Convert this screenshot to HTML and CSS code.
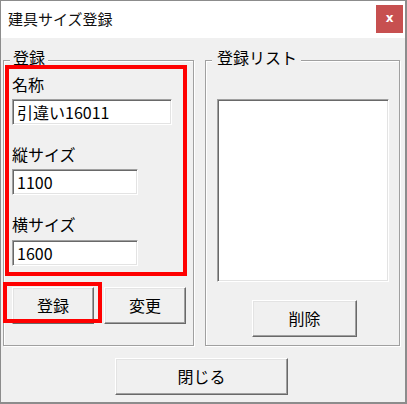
FILE: index.html
```html
<!DOCTYPE html>
<html lang="ja">
<head>
<meta charset="utf-8">
<link rel="stylesheet" href="styles.css">
</head>
<body>
<div class="window">
  <div class="titlebar">
    <div class="title">建具サイズ登録</div>
    <div class="close">x</div>
  </div>
  <div class="client">
    <div class="groups">
      <div class="group group-left">
        <div class="legend">登録</div>
        <div class="redbox">
          <div class="label first">名称</div>
          <div class="input w160 i1">引違い16011</div>
          <div class="label l2">縦サイズ</div>
          <div class="input w126 i2">1100</div>
          <div class="label l3">横サイズ</div>
          <div class="input w126 i3">1600</div>
        </div>
        <div class="btnrow">
          <div class="hl"><div class="btn b82">登録</div></div>
          <div class="btn b82">変更</div>
        </div>
      </div>
      <div class="group group-right">
        <div class="legend">登録リスト</div>
        <div class="listbox"></div>
        <div class="btn del">削除</div>
      </div>
    </div>
    <div class="btn closebtn">閉じる</div>
  </div>
</div>
</body>
</html>
```
FILE: styles.css
```css
*, *::before, *::after { box-sizing: border-box; }
html, body { margin: 0; padding: 0; background: #ffffff; }
body {
  font-family: "Noto Sans CJK JP", "Noto Sans", sans-serif;
  color: #000;
}
.window {
  width: 407px;
  height: 404px;
  border-style: solid;
  border-color: #8c8c8c;
  border-width: 1px 2px 2px 1px;
  background: #f0f0f0;
  display: flex;
  flex-direction: column;
}
.titlebar {
  height: 37px;
  background: #ffffff;
  display: flex;
  justify-content: space-between;
  align-items: flex-start;
  flex: none;
}
.title {
  font-size: 15px;
  line-height: 20px;
  margin: 8px 0 0 7px;
  color: #111;
}
.close {
  width: 27px;
  height: 28px;
  margin: 4px 2px 0 0;
  background: #c75050;
  color: #fff;
  font-family: "DejaVu Sans", sans-serif;
  font-weight: bold;
  font-size: 12px;
  line-height: 26px;
  text-align: center;
}
.client {
  flex: 1;
  padding: 22px 0 0 2px;
  display: flex;
  flex-direction: column;
  align-items: flex-start;
}
.groups {
  display: flex;
  gap: 11px;
}
.group {
  height: 286px;
  border: 1px solid #a0a0a0;
  box-shadow: 1px 1px 0 #ffffff, inset 1px 1px 0 #ffffff;
  display: flex;
  flex-direction: column;
  align-items: flex-start;
}
.group-left { width: 191px; }
.group-right { width: 195px; }
.legend {
  margin: -12px 0 0 6px;
  padding: 0 3px;
  background: #f0f0f0;
  font-size: 16px;
  line-height: 16px;
  height: 16px;
}
.group-right .legend { padding: 0 4px 0 5px; }
.redbox {
  margin: 0 0 0 1px;
  width: 182px;
  height: 211px;
  border: 4px solid #ff0000;
  padding: 5px 0 0 3px;
  display: flex;
  flex-direction: column;
  align-items: flex-start;
}
.label {
  font-size: 16px;
  line-height: 20px;
  height: 20px;
}
.l2 { margin-top: 19px; }
.l3 { margin-top: 19px; }
.input {
  height: 26px;
  background: #ffffff;
  border-style: solid;
  border-width: 1px;
  border-color: #a0a0a0 #ffffff #ffffff #a0a0a0;
  box-shadow: inset 1px 1px 0 #696969, inset -1px -1px 0 #e3e3e3;
  font-size: 16px;
  line-height: 24px;
  padding: 0 0 0 4px;
}
.i1 { margin-top: 5px; }
.i2 { margin-top: 5px; }
.i3 { margin-top: 6px; }
.w160 { width: 160px; }
.w126 { width: 126px; }
.btn {
  height: 37px;
  background: #f0f0f0;
  border-style: solid;
  border-width: 1px;
  border-color: #ffffff #696969 #696969 #ffffff;
  box-shadow: inset -1px -1px 0 #a0a0a0, inset 1px 1px 0 #e3e3e3;
  font-size: 16px;
  line-height: 34px;
  text-align: center;
}
.b82 { width: 82px; }
.btnrow {
  display: flex;
  gap: 10px;
  margin: 11px 0 0 8px;
}
.hl { position: relative; }
.hl::after {
  content: "";
  position: absolute;
  left: -9px;
  top: -5px;
  width: 99px;
  height: 41px;
  border: 4px solid #ff0000;
  pointer-events: none;
}
.listbox {
  margin: 34px 0 0 11px;
  width: 172px;
  height: 183px;
  background: #ffffff;
  border-style: solid;
  border-width: 1px;
  border-color: #a0a0a0 #ffffff #ffffff #a0a0a0;
  box-shadow: inset 1px 1px 0 #696969, inset -1px -1px 0 #e3e3e3;
}
.del {
  margin: 18px 0 0 46px;
  width: 105px;
}
.closebtn {
  margin: 12px 0 0 112px;
  width: 173px;
}
```
